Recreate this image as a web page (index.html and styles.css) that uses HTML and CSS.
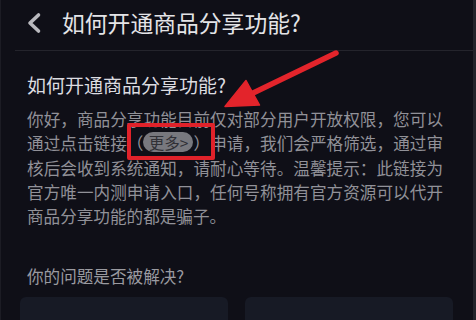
FILE: index.html
```html
<!DOCTYPE html>
<html lang="zh-CN">
<head>
<meta charset="utf-8">
<title>如何开通商品分享功能?</title>
<link rel="stylesheet" href="styles.css">
</head>
<body>
<div class="page">
  <header class="topbar">
    <svg class="back" width="16" height="22" viewBox="0 0 16 22" aria-hidden="true">
      <path d="M12.5 3 L4 11 L12.5 19" fill="none" stroke="#b9b9be" stroke-width="3.6" stroke-linecap="round" stroke-linejoin="round"/>
    </svg>
    <h1 class="topbar-title">如何开通商品分享功能?</h1>
  </header>
  <div class="divider"></div>
  <main class="content">
    <h2 class="q-title">如何开通商品分享功能?</h2>
    <p class="answer">
      <span class="line">你好，商品分享功能目前仅对部分用户开放权限，您可以</span>
      <span class="line">通过点击链接（<span class="more-pill">更多&gt;</span>）申请，我们会严格筛选，通过审</span>
      <span class="line">核后会收到系统通知，请耐心等待。温馨提示：此链接为</span>
      <span class="line">官方唯一内测申请入口，任何号称拥有官方资源可以代开</span>
      <span class="line last">商品分享功能的都是骗子。</span>
    </p>
    <p class="resolved">你的问题是否被解决?</p>
  </main>
  <div class="choices">
    <div class="choice"></div>
    <div class="choice"></div>
  </div>
  <div class="mark-box"></div>
  <svg class="mark-arrow" width="476" height="320" viewBox="0 0 476 320" aria-hidden="true">
    <line x1="336" y1="53" x2="250" y2="94.5" stroke="#e3242b" stroke-width="5.5" stroke-linecap="round"/>
    <polygon points="225,106.5 246,80.5 259.5,105" fill="#e3242b" stroke="#e3242b" stroke-width="1.5" stroke-linejoin="round"/>
  </svg>
</div>
</body>
</html>
```

FILE: styles.css
```css
html, body {
  margin: 0;
  padding: 0;
  background: #0f0f17;
}

body {
  width: 476px;
  height: 320px;
  overflow: hidden;
  font-family: "Noto Sans CJK SC", "Noto Sans", sans-serif;
}

.page {
  position: relative;
  width: 476px;
  height: 320px;
  box-sizing: border-box;
  border-left: 1px solid #1c1c24;
  border-right: 3px solid #23232a;
  background: #0f0f17;
  overflow: hidden;
}

.topbar {
  height: 50px;
  display: flex;
  align-items: center;
  padding-left: 25px;
  padding-bottom: 4px;
  box-sizing: border-box;
}

.back {
  display: block;
  flex: none;
}

.topbar-title {
  margin: 0 0 0 20px;
  font-size: 22.8px;
  font-weight: 400;
  line-height: 28px;
  color: #e4e4e7;
  white-space: nowrap;
}

.divider {
  margin-left: 14px;
  height: 1px;
  background: #24242c;
}

.content {
  padding: 0 32px 0 26px;
}

.q-title {
  margin: 21px 0 0 0;
  font-size: 19px;
  font-weight: 400;
  line-height: 26px;
  color: #dcdce0;
  white-space: nowrap;
}

.answer {
  margin: 9px 0 0 0;
  width: 416px;
  font-size: 16.6px;
  line-height: 24.3px;
  color: #919198;
}

.line {
  display: block;
  height: 24.3px;
  white-space: nowrap;
  text-align: justify;
  text-align-last: justify;
  text-justify: inter-character;
}

.line.last {
  text-align-last: left;
}

.more-pill {
  display: inline-block;
  width: 50px;
  height: 20px;
  border-radius: 10px;
  background: #78787e;
  color: #303036;
  font-size: 15.5px;
  line-height: 20px;
  text-align: center;
  text-align-last: center;
  vertical-align: 1.5px;
}

.resolved {
  margin: 36px 0 0 0;
  font-size: 16.6px;
  line-height: 24px;
  color: #9a9aa0;
}

.choices {
  display: grid;
  grid-template-columns: 208px 208px;
  column-gap: 17px;
  padding-left: 19px;
  margin-top: 9px;
}

.choice {
  height: 60px;
  border-radius: 6px;
  background: #171a25;
}

.mark-box {
  position: absolute;
  left: 126px;
  top: 123px;
  width: 88px;
  height: 37px;
  box-sizing: border-box;
  border: 4px solid #e0222a;
  border-radius: 2px;
}

.mark-arrow {
  position: absolute;
  left: -1px;
  top: 0;
  pointer-events: none;
}
```
